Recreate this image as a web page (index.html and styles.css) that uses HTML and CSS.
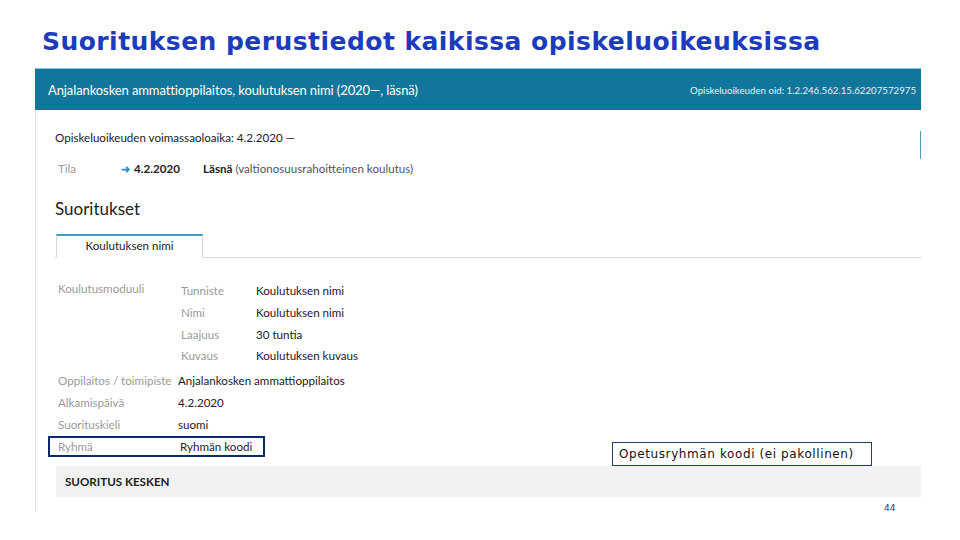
FILE: index.html
```html
<!DOCTYPE html>
<html lang="fi">
  <head>
    <meta charset="UTF-8" />
    <title>Suorituksen perustiedot</title>
    <link rel="stylesheet" href="styles.css">
  </head>

  <body>
    <div class="slide">
      <!-- otsikko -->
      <h1 class="title">Suorituksen perustiedot kaikissa opiskeluoikeuksissa</h1>

      <!-- kuvakaappaus -->
      <div class="panel">
        <div class="panel-head">
          <span class="head-name">Anjalankosken ammattioppilaitos, koulutuksen nimi (2020—, läsnä)</span>
          <span class="head-oid">Opiskeluoikeuden oid: 1.2.246.562.15.62207572975</span>
        </div>

        <div class="panel-body">
          <div class="period-row">
            <span class="period">Opiskeluoikeuden voimassaoloaika: 4.2.2020 —</span>
            <span class="edge-btn"></span>
          </div>

          <div class="tila-row">
            <span class="label tila-label">Tila</span>
            <span class="tila-date"><span class="arrow">➜</span>4.2.2020</span>
            <span class="tila-state"><b>Läsnä</b> (valtionosuusrahoitteinen koulutus)</span>
          </div>

          <h2 class="section">Suoritukset</h2>

          <div class="tabs">
            <div class="tab active">Koulutuksen nimi</div>
          </div>

          <div class="props">
            <div class="prop module">
              <span class="label">Koulutusmoduuli</span>
              <div class="sub">
                <span class="label">Tunniste</span><span class="value">Koulutuksen nimi</span>
                <span class="label">Nimi</span><span class="value">Koulutuksen nimi</span>
                <span class="label">Laajuus</span><span class="value">30 tuntia</span>
                <span class="label">Kuvaus</span><span class="value">Koulutuksen kuvaus</span>
              </div>
            </div>
            <div class="prop">
              <span class="label">Oppilaitos / toimipiste</span>
              <span class="value">Anjalankosken ammattioppilaitos</span>
            </div>
            <div class="prop">
              <span class="label">Alkamispäivä</span>
              <span class="value">4.2.2020</span>
            </div>
            <div class="prop">
              <span class="label">Suorituskieli</span>
              <span class="value">suomi</span>
            </div>
            <div class="prop highlight">
              <span class="label">Ryhmä</span>
              <span class="value">Ryhmän koodi</span>
            </div>
          </div>

          <div class="status">SUORITUS KESKEN</div>
        </div>
      </div>

      <!-- huomautus -->
      <div class="note">Opetusryhmän koodi (ei pakollinen)</div>
      <div class="page-num">44</div>
    </div>
  </body>
</html>
```

FILE: styles.css
```css
* {
  margin: 0;
  padding: 0;
  box-sizing: border-box;
}

body {
  background: #fff;
}

.slide {
  position: relative;
  width: 960px;
  height: 540px;
  overflow: hidden;
  font-family: Lato, "Liberation Sans", sans-serif;
}

/* otsikko */
.title {
  padding: 27px 0 0 42px;
  height: 68px;
  font-family: "DejaVu Sans", Verdana, sans-serif;
  font-size: 25px;
  font-weight: bold;
  color: #1c3bbd;
  letter-spacing: 0.45px;
}

/* kuvakaappaus */
.panel {
  width: 886px;
  margin-left: 35px;
  height: 444px;
}

.panel-head {
  display: flex;
  justify-content: space-between;
  align-items: center;
  height: 42px;
  padding: 0 5px 0 13px;
  background: #10769b;
  border-top: 1px solid #8cc8dc;
  color: #fff;
}

.head-name {
  font-size: 13px;
  letter-spacing: -0.1px;
}

.head-oid {
  font-size: 9.7px;
  color: #e6f2f7;
}

.panel-body {
  height: 402px;
  border-left: 1px solid #e2e2e2;
  padding: 21px 0 0 19px;
  color: #222;
  font-size: 11.6px;
}

.period-row {
  display: flex;
  justify-content: space-between;
  height: 27px;
  align-items: flex-start;
}

.edge-btn {
  width: 1px;
  height: 28px;
  background: #4a9dbb;
}

.tila-row {
  display: flex;
  align-items: center;
  height: 20px;
  padding-left: 3px;
}

.label {
  color: #9a9a9a;
}

.tila-label {
  width: 62px;
}

.tila-date {
  width: 83px;
  font-weight: bold;
}

.arrow {
  color: #2a8fc9;
  font-size: 10.5px;
  font-weight: bold;
  margin-left: 1px;
  margin-right: 4px;
}

.tila-state {
  color: #555;
}

.tila-state b {
  font-weight: bold;
  color: #222;
}

.section {
  margin-top: 20px;
  font-size: 17px;
  font-weight: normal;
  color: #222;
}

.tabs {
  display: flex;
  margin-top: 15px;
  border-bottom: 1px solid #d6d6d6;
}

.tab {
  width: 147px;
  height: 24px;
  margin-left: 1px;
  margin-bottom: -1px;
  border: 1px solid #d6d6d6;
  border-top: 2px solid #3f9dbc;
  border-bottom-color: #fff;
  background: #fff;
  text-align: center;
  line-height: 20px;
  font-size: 11.6px;
}

.props {
  margin-top: 24px;
  padding-left: 3px;
}

.prop {
  display: grid;
  grid-template-columns: 120px 1fr;
  height: 22.3px;
  align-items: center;
}

.prop.module {
  align-items: start;
  height: 87px;
}

.sub {
  display: grid;
  grid-template-columns: 75px 1fr;
  grid-auto-rows: 21.7px;
  align-items: center;
  padding-left: 3px;
  margin-top: -2px;
}

.prop.highlight {
  width: 217px;
  margin-left: -10px;
  padding-left: 8px;
  grid-template-columns: 122px 1fr;
  height: 21px;
  border: 2px solid #0b2870;
}

.status {
  display: flex;
  align-items: center;
  height: 31px;
  margin-top: 9px;
  margin-left: 1px;
  padding-left: 9px;
  background: #f2f2f2;
  font-weight: bold;
  font-size: 11.6px;
}

/* huomautus */
.note {
  position: absolute;
  left: 612px;
  top: 442px;
  width: 260px;
  height: 24px;
  padding-left: 6px;
  border: 1px solid #1e3d6e;
  background: #fff;
  font-family: "DejaVu Sans", Verdana, sans-serif;
  font-size: 12px;
  line-height: 22px;
  letter-spacing: 0.6px;
  color: #111;
}

.page-num {
  position: absolute;
  left: 884px;
  top: 503px;
  font-family: "DejaVu Sans", Verdana, sans-serif;
  font-size: 9px;
  color: #1e3d6e;
}
```
